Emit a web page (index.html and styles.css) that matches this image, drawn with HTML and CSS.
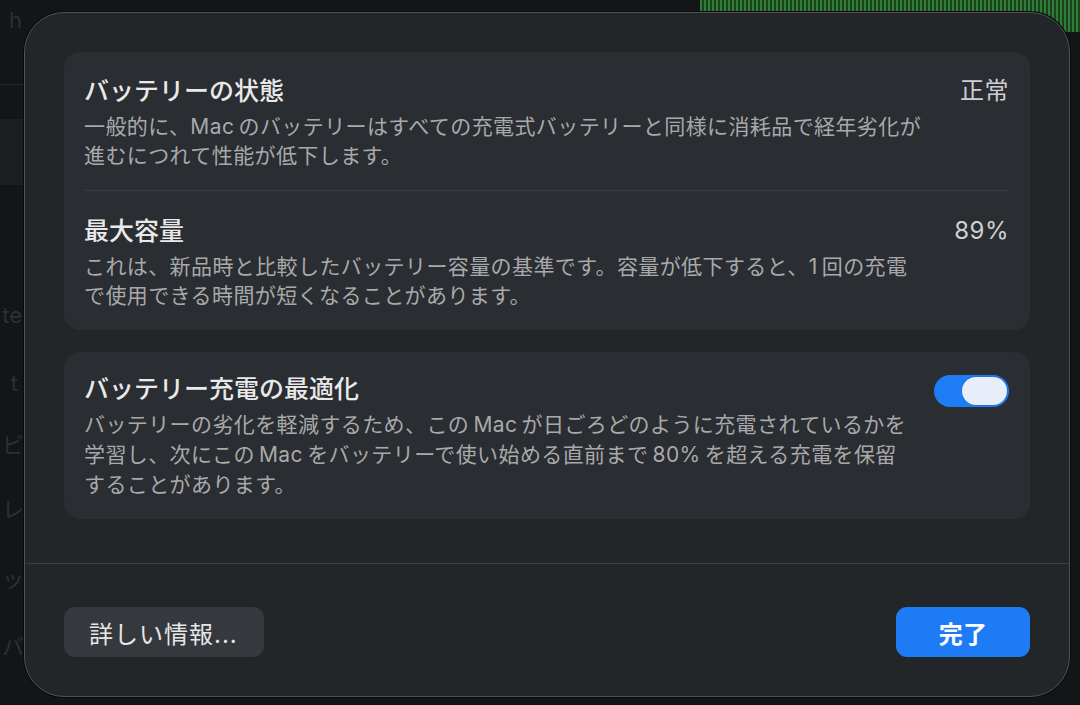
FILE: index.html
```html
<!DOCTYPE html>
<html lang="ja">

<head>
    <meta charset="UTF-8" />
    <meta name="viewport" content="width=device-width, initial-scale=1.0" />
    <title>バッテリー</title>
    <link rel="stylesheet" href="styles.css">
</head>

<body>
    <div class="behind">
        <span class="ghost g-h">h</span>
        <span class="ghost-line"></span>
        <span class="ghost-block"></span>
        <span class="ghost g-te">te</span>
        <span class="ghost g-t">t</span>
        <span class="ghost g-bi">ビ</span>
        <span class="ghost g-re">レ</span>
        <span class="ghost g-tsu">ッ</span>
        <span class="ghost g-ba">バ</span>
    </div>

    <div class="dialog">
        <div class="content">
            <div class="card">
                <div class="row">
                    <div class="text">
                        <div class="title">バッテリーの状態</div>
                        <div class="desc">一般的に、Mac&#8201;のバッテリーはすべての充電式バッテリーと同様に消耗品で経年劣化が<br>進むにつれて性能が低下します。</div>
                    </div>
                    <div class="value">正常</div>
                </div>
                <div class="row">
                    <div class="text">
                        <div class="title">最大容量</div>
                        <div class="desc">これは、新品時と比較したバッテリー容量の基準です。容量が低下すると、1&#8201;回の充電<br>で使用できる時間が短くなることがあります。</div>
                    </div>
                    <div class="value">89%</div>
                </div>
            </div>

            <div class="card card-single">
                <div class="row">
                    <div class="text">
                        <div class="title">バッテリー充電の最適化</div>
                        <div class="desc desc-loose">バッテリーの劣化を軽減するため、この&#8201;Mac&#8201;が日ごろどのように充電されているかを<br>学習し、次にこの&#8201;Mac&#8201;をバッテリーで使い始める直前まで&#8201;80%&#8201;を超える充電を保留<br>することがあります。</div>
                    </div>
                    <div class="toggle on">
                        <div class="knob"></div>
                    </div>
                </div>
            </div>
        </div>

        <div class="footer">
            <button class="btn">詳しい情報...</button>
            <button class="btn btn-primary">完了</button>
        </div>
    </div>
</body>

</html>
```

FILE: styles.css
```css
* {
    box-sizing: border-box;
}

body {
    margin: 0;
    width: 1080px;
    height: 705px;
    overflow: hidden;
    display: flex;
    padding-top: 12px;
    font-family: Inter, "Noto Sans CJK JP", sans-serif;
    background:
        repeating-linear-gradient(90deg, #2f7d37 0 2px, #1a421e 2px 4px) 700px 0 / 380px 32px no-repeat,
        #141517;
}

/* window behind the sheet, mostly hidden */
.behind {
    width: 24px;
    height: 685px;
    overflow: hidden;
    display: flex;
    flex-direction: column;
    align-items: flex-end;
    margin-top: -12px;
}

.ghost {
    color: #2f3032;
    font-size: 22px;
    line-height: 28px;
    white-space: nowrap;
}

.g-h {
    margin-top: 6px;
    margin-right: 2px;
}

.ghost-line {
    width: 24px;
    height: 1px;
    background: #2a2b2d;
    margin-top: 50px;
}

.ghost-block {
    width: 24px;
    height: 66px;
    background: #1d1e20;
    margin-top: 34px;
}

.g-te {
    margin-top: 116px;
    margin-right: 2px;
}

.g-t {
    margin-top: 40px;
    margin-right: 6px;
}

.g-bi {
    margin-top: 34px;
    margin-right: 0;
}

.g-re {
    margin-top: 36px;
    margin-right: 0;
}

.g-tsu {
    margin-top: 42px;
    margin-right: 0;
}

.g-ba {
    margin-top: 40px;
    margin-right: 0;
}

.dialog {
    width: 1046px;
    height: 685px;
    background: #232629;
    border: 1px solid #505255;
    border-radius: 40px;
    box-shadow: 0 0 0 1px #0a0a0b;
    display: flex;
    flex-direction: column;
}

.content {
    flex: 1;
    padding: 39px 39px 0;
    display: flex;
    flex-direction: column;
    gap: 22px;
}

.card {
    background: #2a2d31;
    border-radius: 16px;
    padding: 0 21px 0 20px;
}

.row {
    display: flex;
    justify-content: space-between;
    align-items: flex-start;
    gap: 20px;
    padding: 24px 0 20px;
}

.row + .row {
    border-top: 1px solid #3a3d40;
    padding-top: 25px;
}

.card-single .row {
    padding: 22px 0 19px;
}

.title {
    color: #e9e9ea;
    font-size: 25px;
    line-height: 30px;
    font-weight: 500;
    margin-bottom: 6px;
}

.desc {
    color: #a8a9ab;
    font-size: 21px;
    line-height: 29px;
    letter-spacing: 0.4px;
    white-space: nowrap;
}

.desc-loose {
    line-height: 30px;
}

.value {
    color: #cfd0d1;
    font-size: 24px;
    line-height: 30px;
    letter-spacing: 0.5px;
}

.toggle {
    width: 75px;
    height: 32px;
    border-radius: 16px;
    background: #1e7cf6;
    margin-top: 1px;
    padding: 2px;
    display: flex;
    justify-content: flex-end;
    flex-shrink: 0;
}

.knob {
    width: 45px;
    height: 28px;
    border-radius: 14px;
    background: #e8edfa;
    box-shadow: 0 0 0 1px rgba(0, 0, 0, 0.08);
}

.footer {
    border-top: 1px solid #3c3f42;
    padding: 43px 39px 39px;
    display: flex;
    justify-content: space-between;
}

.btn {
    height: 50px;
    padding: 0 26px 0 25px;
    border: none;
    border-radius: 11px;
    background: #35383c;
    color: #e6e6e7;
    font-family: Inter, "Noto Sans CJK JP", sans-serif;
    font-size: 24px;
    letter-spacing: 1px;
}

.btn-primary {
    width: 134px;
    padding: 0;
    background: #1d7cf5;
    color: #ffffff;
    font-weight: 600;
    letter-spacing: 0.3px;
}
```
